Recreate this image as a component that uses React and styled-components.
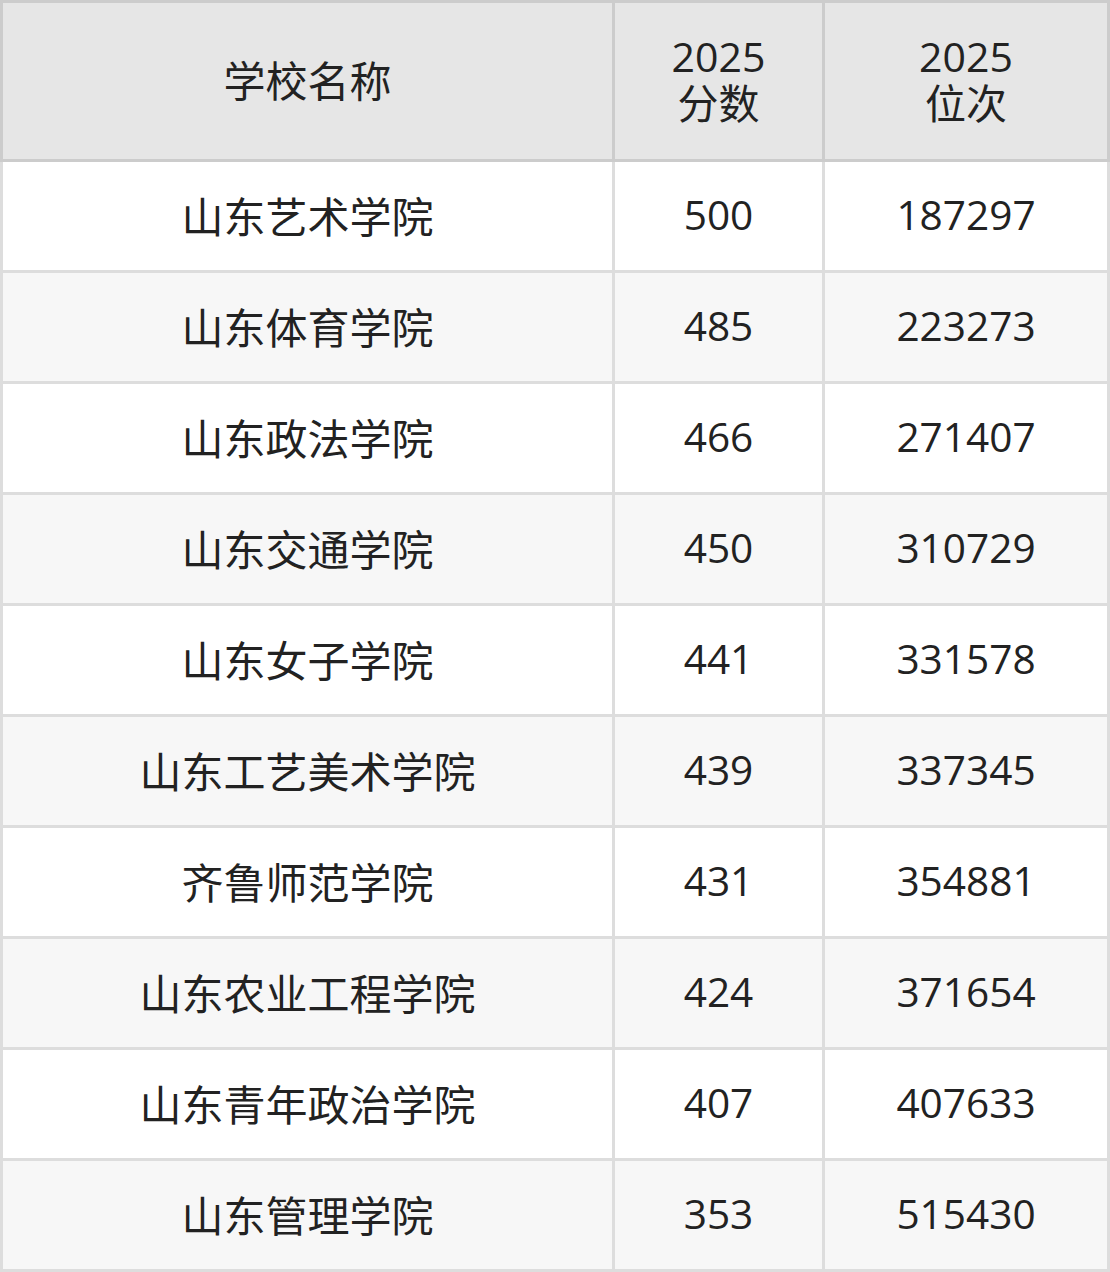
import React from 'react';
import styled, { createGlobalStyle } from 'styled-components';

const GlobalStyle = createGlobalStyle`
  html, body {
    margin: 0;
    padding: 0;
    background: #ffffff;
  }
`;

const Table = styled.table`
  width: 1110px;
  table-layout: fixed;
  border-collapse: collapse;
  font-family: "Open Sans", "Noto Sans CJK SC", sans-serif;
  font-size: 41px;
  color: #222222;
  text-align: center;
`;

const HeadRow = styled.tr`
  height: 159px;
  background: #e6e6e6;
`;

const HeadCell = styled.th`
  border: 3px solid #cccccc;
  font-weight: 400;
  font-size: ${p => (p.$name ? '42px' : '41px')};
  line-height: 47px;
  padding: 0 0 2px;
`;

const BodyRow = styled.tr`
  height: 111px;
  background: ${p => (p.$striped ? '#f7f7f7' : '#ffffff')};
`;

const Cell = styled.td`
  border: 3px solid #dddddd;
  font-size: ${p => (p.$name ? '42px' : '40.6px')};
  padding: 0 0 4px;
`;

const rows = [
  ['山东艺术学院', '500', '187297'],
  ['山东体育学院', '485', '223273'],
  ['山东政法学院', '466', '271407'],
  ['山东交通学院', '450', '310729'],
  ['山东女子学院', '441', '331578'],
  ['山东工艺美术学院', '439', '337345'],
  ['齐鲁师范学院', '431', '354881'],
  ['山东农业工程学院', '424', '371654'],
  ['山东青年政治学院', '407', '407633'],
  ['山东管理学院', '353', '515430'],
];

export default function App() {
  return (
    <>
      <GlobalStyle />
      <Table>
        <colgroup>
          <col style={{ width: 612 }} />
          <col style={{ width: 210 }} />
          <col style={{ width: 285 }} />
        </colgroup>
        <thead>
          <HeadRow>
            <HeadCell $name>学校名称</HeadCell>
            <HeadCell>2025<br />分数</HeadCell>
            <HeadCell>2025<br />位次</HeadCell>
          </HeadRow>
        </thead>
        <tbody>
          {rows.map((r, i) => (
            <BodyRow key={r[0]} $striped={i % 2 === 1}>
              <Cell $name>{r[0]}</Cell>
              <Cell>{r[1]}</Cell>
              <Cell>{r[2]}</Cell>
            </BodyRow>
          ))}
        </tbody>
      </Table>
    </>
  );
}
